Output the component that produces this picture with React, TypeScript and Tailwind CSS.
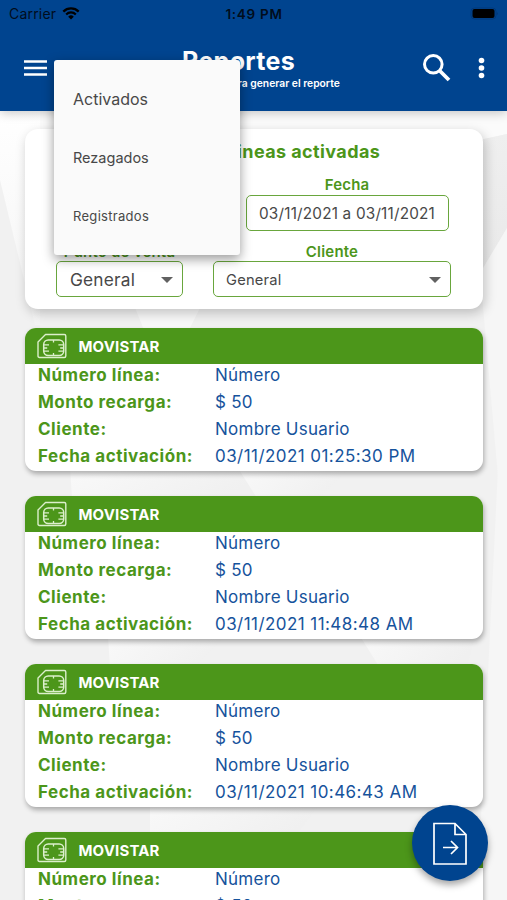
import React from "react";

const dates = [
  "03/11/2021 01:25:30 PM",
  "03/11/2021 11:48:48 AM",
  "03/11/2021 10:46:43 AM",
  "03/11/2021 10:40:12 AM",
];

function StatusBar() {
  return (
    <div className="flex h-7 items-center justify-between pl-[9px] pr-[9px] text-[#000d1c]">
      <div className="flex w-[120px] items-center gap-[6px]">
        <span className="text-[14px] leading-none tracking-[0.2px]">Carrier</span>
        <svg className="-mt-[2px]" width="18" height="13" viewBox="0 0 19 14" fill="none" stroke="#000">
          <path d="M1.2 4.9a12 12 0 0 1 16.6 0" strokeWidth="2.5" />
          <path d="M4.3 8a7.5 7.5 0 0 1 10.4 0" strokeWidth="2.4" />
          <path d="M9.5 13.5 6.5 10.4a4.4 4.4 0 0 1 6 0z" fill="#000" stroke="none" />
        </svg>
      </div>
      <span className="ml-px mt-px text-[13.5px] font-semibold leading-none tracking-[0.7px]">1:49 PM</span>
      <div className="flex w-[120px] items-center justify-end">
        <svg width="31" height="14" viewBox="0 0 31 14">
          <rect x="4" y="1" width="25" height="11" rx="3.5" fill="none" stroke="#00397a" />
          <rect x="5.500" y="2" width="22" height="9" rx="2" fill="#000" />
          <path d="M29.800 5v3q1-.5 1-1.500t-1-1.500z" fill="#00397a" />
        </svg>
      </div>
    </div>
  );
}

function SimIcon() {
  return (
    <svg width="30" height="26" viewBox="0 0 30 26" fill="none" stroke="#dcefcc" strokeLinejoin="round">
      <path d="M8.500 1.500H27.300q1.500 0 1.500 1.500v20q0 1.500-1.500 1.500H2.500Q1 24.500 1 23V9z" strokeWidth="1.400" />
      <rect x="6.700" y="7" width="20" height="15.500" rx="4.500" strokeWidth="1.500" />
      <path d="M16.500 7v2.500M16.500 22.500V20M6.700 11.800h5.300M6.700 15h3.500M6.700 18.200h5.300M26.700 11.800h-5.300M26.700 15h-3.500M26.700 18.200h-5.300" strokeWidth="1.300" />
    </svg>
  );
}

function Card({ date }: { date: string }) {
  const rows = [
    ["Número línea:", "Número"],
    ["Monto recarga:", "$ 50"],
    ["Cliente:", "Nombre Usuario"],
    ["Fecha activación:", date],
  ];
  return (
    <article className="h-[143px] shrink-0 overflow-hidden rounded-[11px] bg-white shadow-[1px_3px_5px_rgba(0,0,0,0.3)]">
      <header className="flex h-[35.500px] items-center gap-[11.500px] bg-[#4c961a] pl-3 text-white">
        <SimIcon />
        <h2 className="mt-[2px] text-[15px] font-bold tracking-[0.150px]">MOVISTAR</h2>
      </header>
      <dl className="-mt-[1.500px] pl-[13px]">
        {rows.map(([label, value]) => (
          <div key={label} className="flex h-[27px] items-center whitespace-nowrap text-[17px]">
            <dt className="w-[177px] font-bold tracking-[0.530px] text-[#4c961a]">{label}</dt>
            <dd className={value === date ? "tracking-[0.440px] text-[#16539c]" : "tracking-[0.250px] text-[#16539c]"}>{value}</dd>
          </div>
        ))}
      </dl>
    </article>
  );
}

function Caret() {
  return (
    <svg width="12" height="6" viewBox="0 0 12 6">
      <path d="M0 0h12L6 6z" fill="#616161" />
    </svg>
  );
}

function Background() {
  return (
    <svg className="absolute inset-0" width="507" height="900" viewBox="0 0 507 900">
      <defs>
        <linearGradient id="fold" x1="0" y1="0" x2="1" y2="0.300">
          <stop offset="0" stopColor="#f9f9f9" />
          <stop offset="1" stopColor="#f0f0f0" />
        </linearGradient>
        <linearGradient id="shade" x1="0" y1="0" x2="0" y2="1">
          <stop offset="0" stopColor="#efefef" />
          <stop offset="1" stopColor="#e8e8e8" />
        </linearGradient>
        <linearGradient id="left" x1="0" y1="0" x2="0" y2="1">
          <stop offset="0" stopColor="#fff" />
          <stop offset="1" stopColor="#f4f4f4" />
        </linearGradient>
      </defs>
      <path d="M0 0h507v900H0z" fill="#f1f1f1" />
      <path d="M0 110h507v24l-35 8H0z" fill="#fbfbfb" />
      <path d="M0 110h40v215H35L0 180z" fill="url(#left)" />
      <path d="M470 142l37-8v94l-37 68z" fill="url(#shade)" />
      <path d="M507 228v240l-8 20-19-215z" fill="#f6f6f6" />
      <path d="M132 300h72l-15 30h-45z" fill="#f8f8f8" />
      <path d="M70 468h170l22 30H72z" fill="url(#fold)" />
      <path d="M238 468h112l-31 30h-62z" fill="url(#fold)" />
      <path d="M108 636h120l-35 32h-83z" fill="url(#fold)" />
      <path d="M360 636h115l-8 32h-87z" fill="url(#fold)" />
      <path d="M498 468h9v432h-30z" fill="#f6f6f6" />
      <path d="M150 804h170l-24 32H150z" fill="url(#fold)" />
    </svg>
  );
}

export default function App() {
  return (
    <div className="relative flex h-[900px] w-[507px] flex-col overflow-hidden bg-[#f1f1f1] font-['Inter','Liberation_Sans',sans-serif]">
      <Background />
      <header className="relative h-[110.500px] shrink-0 bg-[#00448f] shadow-[0_2px_10px_rgba(0,0,0,0.22)]">
        <StatusBar />
        <div className="flex h-20 items-center pl-6 pr-[22px] text-white">
          <svg width="23" height="16" viewBox="0 0 23 16" fill="currentColor">
            <path d="M0 .2h23v2.500H0zM0 6.700h23v2.500H0zM0 13.200h23v2.500H0z" />
          </svg>
          <div className="ml-[73px] flex w-[237px] flex-col items-center">
            <h1 className="text-[25px] font-bold leading-[30px] tracking-[0.3px]">Reportes</h1>
            <p className="whitespace-nowrap text-[10.300px] font-semibold leading-[14px]">Seleccione fecha para generar el reporte</p>
          </div>
          <svg className="ml-[66px]" width="28" height="28" viewBox="0 0 28 28" fill="none" stroke="currentColor">
            <circle cx="10.300" cy="10.300" r="8.800" strokeWidth="3" />
            <path d="M16.500 16.500 26 26" strokeWidth="3.800" />
          </svg>
          <svg className="ml-auto" width="7" height="22" viewBox="0 0 7 22" fill="currentColor">
            <circle cx="3.500" cy="3.500" r="2.800" />
            <circle cx="3.500" cy="11" r="2.800" />
            <circle cx="3.500" cy="18.500" r="2.800" />
          </svg>
        </div>
      </header>

      <main className="relative flex flex-col gap-[25px] pl-[25px] pr-[24.500px] pt-[18.500px]">
        <section className="-mb-[6px] flex h-[180px] shrink-0 flex-col rounded-[13px] bg-white shadow-[2px_4px_12px_rgba(0,0,0,0.22)]">
          <h2 className="mt-[12px] text-center text-[18px] font-bold leading-[22px] tracking-[0.400px] text-[#4c961a]">Reporte de lineas activadas</h2>
          <div className="mt-[13px] flex justify-end pr-[34px]">
            <label className="flex w-[203px] flex-col text-center text-[15px] font-semibold leading-[18px] tracking-[0.200px] text-[#4c961a]">
              Fecha
              <span className="mt-px flex h-9 items-center justify-center rounded-[5px] border-[1.500px] border-[#69a63d] pt-px text-[15.300px] font-normal text-[#484848]">03/11/2021 a 03/11/2021</span>
            </label>
          </div>
          <div className="mt-[12px] flex gap-[30px] pl-[31px]">
            <label className="flex w-[127px] flex-col text-center text-[15px] font-semibold leading-[18px] tracking-[0.200px] text-[#4c961a]">
              Punto de venta
              <span className="flex h-9 items-center justify-between rounded-[5px] border-[1.500px] border-[#69a63d] pl-[13px] pr-[9px] pt-px text-[17.300px] font-normal text-[#484848]">General<Caret /></span>
            </label>
            <label className="flex w-[238px] flex-col text-center text-[15px] font-semibold leading-[18px] tracking-[0.200px] text-[#4c961a]">
              Cliente
              <span className="flex h-9 items-center justify-between rounded-[5px] border-[1.500px] border-[#69a63d] pl-3 pr-[9px] pt-px text-[14.700px] font-normal text-[#484848]">General<Caret /></span>
            </label>
          </div>
        </section>
        {dates.map((date) => (
          <Card key={date} date={date} />
        ))}
      </main>

      <nav className="absolute left-[54px] top-[60px] flex h-[195px] w-[186px] flex-col rounded-[3px] bg-[#fafafa] pl-[19px] pt-[10px] text-[#484848] shadow-[0_4px_12px_rgba(0,0,0,0.4)]">
        <span className="flex h-[58.500px] items-center text-[16px]">Activados</span>
        <span className="flex h-[58.500px] items-center text-[14.500px]">Rezagados</span>
        <span className="flex h-[58.500px] items-center text-[13px] tracking-[0.300px]">Registrados</span>
      </nav>

      <button className="absolute left-[412px] top-[805px] flex h-[76px] w-[76px] items-center justify-center rounded-full bg-[#00448f] shadow-[0_4px_7px_rgba(0,0,0,0.35)]">
        <svg width="34" height="43" viewBox="0 0 34 43" fill="none" stroke="#fff" strokeWidth="1.700">
          <path d="M1 1.500h21L33 12.500v29.500H1zM22 1.500v11H33M10 25.500h14.500M18 19l6.500 6.500-6.500 6.500" />
        </svg>
      </button>
    </div>
  );
}
